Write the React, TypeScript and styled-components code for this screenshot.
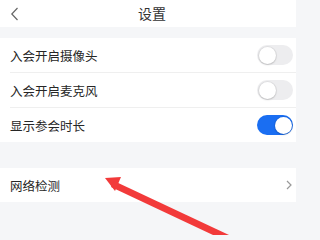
import React from "react";
import styled, { createGlobalStyle } from "styled-components";

const GlobalStyle = createGlobalStyle`
  html, body {
    margin: 0;
    padding: 0;
    background: #f5f6f8;
  }
  body {
    font-family: "Noto Sans CJK SC", "Noto Sans", sans-serif;
    color: #333;
  }
`;

const Page = styled.div`
  position: relative;
  width: 296px;
  height: 235px;
  overflow: hidden;
  background: #f5f6f8;
`;

const Header = styled.div`
  height: 27px;
  background: #fff;
  display: grid;
  grid-template-columns: 40px 1fr 40px;
  align-items: center;
`;

const Back = styled.div`
  padding-left: 10px;
  display: flex;
  align-items: center;
`;

const Title = styled.div`
  text-align: center;
  font-size: 14px;
  color: #333;
  margin-left: 8px;
  margin-top: -2px;
`;

const Group = styled.div<{ $top: number }>`
  margin-top: ${(p) => p.$top}px;
  background: #fff;
  display: flex;
  flex-direction: column;
`;

const Row = styled.div<{ $divider?: boolean }>`
  height: 34px;
  margin-left: 10px;
  padding-right: 3px;
  display: flex;
  align-items: center;
  justify-content: space-between;
  border-bottom: ${(p) => (p.$divider ? "1px solid #efefef" : "none")};
`;

const Label = styled.span`
  font-size: 12.5px;
  color: #262626;
`;

const Toggle = styled.div<{ $on?: boolean }>`
  position: relative;
  width: 36px;
  height: 20px;
  border-radius: 10px;
  box-sizing: border-box;
  background: ${(p) => (p.$on ? "#1a6ef2" : "#ededef")};
  &::after {
    content: "";
    position: absolute;
    top: 1.5px;
    left: ${(p) => (p.$on ? "17.5px" : "1.5px")};
    width: 17px;
    height: 17px;
    border-radius: 50%;
    background: #fff;
    box-shadow: 0 0 0 1px rgba(0, 0, 0, 0.06), 0 1px 2px rgba(0, 0, 0, 0.15);
  }
`;

const Arrow = styled.svg`
  position: absolute;
  left: 0;
  top: 0;
  pointer-events: none;
`;

const settings = [
  { label: "入会开启摄像头", on: false },
  { label: "入会开启麦克风", on: false },
  { label: "显示参会时长", on: true },
];

export default function App() {
  return (
    <>
      <GlobalStyle />
      <Page>
        <Header>
          <Back>
            <svg width="9" height="14" viewBox="0 0 9 14">
              <path d="M7.5 1 L1.8 7 L7.5 13" fill="none" stroke="#666" strokeWidth="1.2" />
            </svg>
          </Back>
          <Title>设置</Title>
          <div />
        </Header>
        <Group $top={11}>
          {settings.map((s, i) => (
            <Row key={s.label} $divider={i < settings.length - 1}>
              <Label>{s.label}</Label>
              <Toggle $on={s.on} />
            </Row>
          ))}
        </Group>
        <Group $top={26}>
          <Row>
            <Label>网络检测</Label>
            <svg width="8" height="12" viewBox="0 0 8 12">
              <path d="M2 2 L6 6 L2 10" fill="none" stroke="#999" strokeWidth="1.2" />
            </svg>
          </Row>
        </Group>
        <Arrow width="296" height="235" viewBox="0 0 296 235">
          <polygon points="105,178 121,177 115,191" fill="#f23a3a" />
          <polygon points="114,181 229,235 213,235 111,187" fill="#f23a3a" />
        </Arrow>
      </Page>
    </>
  );
}
